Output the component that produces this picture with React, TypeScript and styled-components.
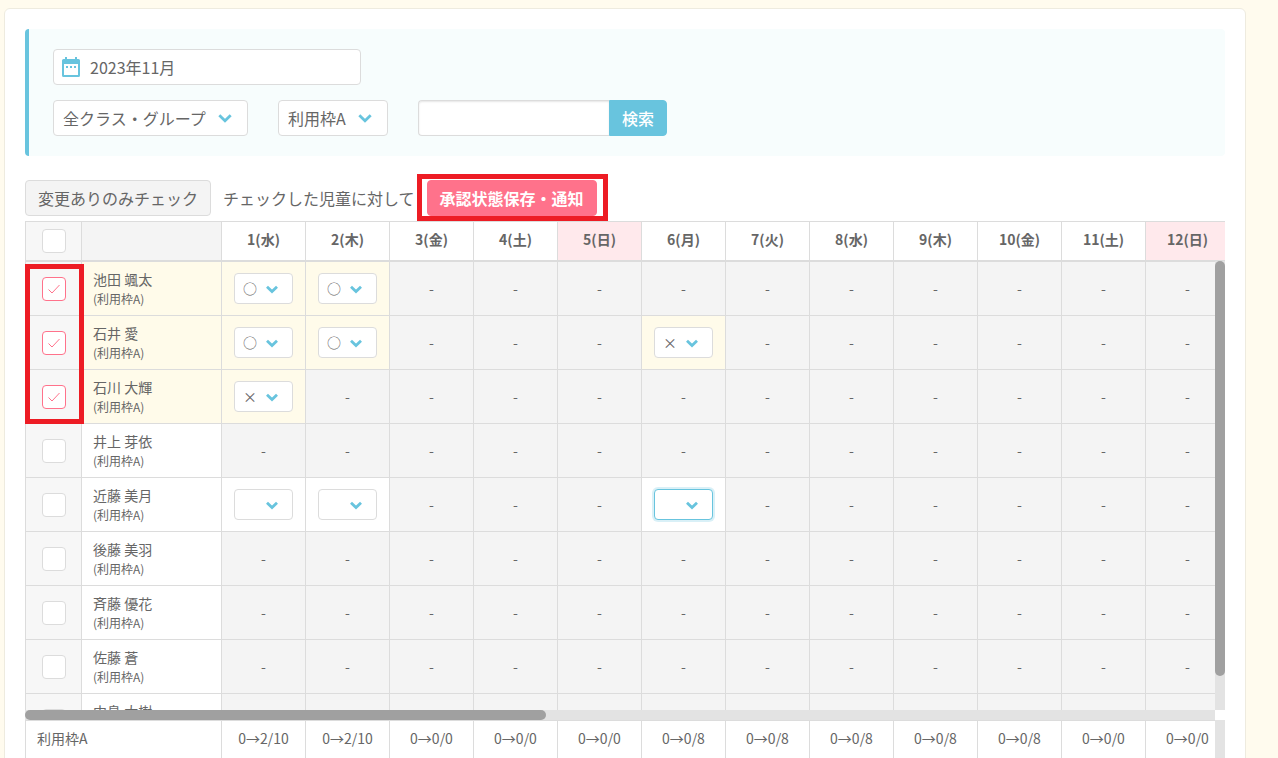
import React from "react";
import styled, { createGlobalStyle, css } from "styled-components";

const color = {
  page: "#fffbee",
  text: "#666666",
  line: "#dcdcdc",
  accent: "#68c4de",
  pink: "#ff728b",
  mute: "#f4f4f4",
  changed: "#fffbea",
  holiday: "#ffe9ec",
  mark: "#ed1c24",
};

const GlobalStyle = createGlobalStyle`
  *, *::before, *::after { box-sizing: border-box; }
  html, body, #root { height: 100%; }
  body {
    margin: 0;
    background: ${color.page};
    color: ${color.text};
    font-family: "Noto Sans CJK JP", sans-serif;
    font-size: 16px;
    line-height: 24px;
  }
  button, input, select { font: inherit; color: inherit; margin: 0; }
`;

const Page = styled.div`
  height: 100%;
  overflow: hidden;
  padding: 8px 32px 0 4px;
`;

const Card = styled.main`
  padding: 20px;
  background: #fff;
  border: 1px solid #eeebdf;
  border-radius: 6px;
`;

const FilterPanel = styled.form`
  display: flex;
  flex-direction: column;
  gap: 15px;
  padding: 20px 24px;
  background: #f7fdfd;
  border-left: 4px solid ${color.accent};
  border-radius: 4px;
`;

const FilterRow = styled.div`
  display: flex;
  gap: 30px;
`;

const field = css`
  height: 36px;
  background: #fff;
  border: 1px solid ${color.line};
  border-radius: 4px;
`;

const DateField = styled.label`
  ${field}
  display: flex;
  align-items: center;
  gap: 9px;
  width: 308px;
  padding: 0 7px;
`;

const DateInput = styled.input`
  flex: 1;
  min-width: 0;
  padding: 0;
  border: 0;
  outline: 0;
  background: none;
`;

const SearchGroup = styled.div`
  display: flex;
`;

const SearchInput = styled.input`
  ${field}
  width: 191px;
  padding: 0 10px;
  border-right: 0;
  border-radius: 4px 0 0 4px;
  box-shadow: inset 0 1px 2px rgba(0, 0, 0, 0.1);
`;

const Button = styled.button<{ $tone: "accent" | "pink" | "plain" }>`
  height: 36px;
  padding: 0 12px;
  border: 1px solid;
  border-radius: 4px;
  white-space: nowrap;
  ${({ $tone }) =>
    $tone === "plain"
      ? css`
          background: ${color.mute};
          border-color: ${color.line};
        `
      : css`
          background: ${color[$tone]};
          border-color: ${color[$tone]};
          color: #fff;
          font-weight: ${$tone === "pink" ? 700 : 500};
        `}
`;

const SearchButton = styled(Button)`
  border-radius: 0 4px 4px 0;
`;

const SelectBox = styled.span<{ $small?: boolean; $width: number }>`
  position: relative;
  display: inline-flex;
  vertical-align: top;
  width: ${({ $width }) => $width}px;
  svg {
    position: absolute;
    top: 50%;
    right: ${({ $small }) => ($small ? 14 : 16)}px;
    transform: translateY(-50%);
    pointer-events: none;
  }
`;

const SelectControl = styled.select<{ $small?: boolean; $focused?: boolean }>`
  ${field}
  appearance: none;
  width: 100%;
  padding: 0 9px;
  outline: 0;
  ${({ $small }) =>
    $small &&
    css`
      height: 31px;
      padding: 0 8px 2px;
      font-size: 14px;
      line-height: 20px;
    `}
  ${({ $focused }) =>
    $focused &&
    css`
      border-color: ${color.accent};
      box-shadow: 0 0 0 2px rgba(104, 196, 222, 0.25);
    `}
`;

const Toolbar = styled.div`
  display: flex;
  align-items: center;
  gap: 12px;
  margin: 24px 0 5px;
`;

const Marked = styled.span`
  position: relative;
  display: flex;
  &::after {
    content: "";
    position: absolute;
    inset: -6px -11px -5px -10px;
    border: 5px solid ${color.mark};
    pointer-events: none;
  }
`;

const CheckMarked = styled.div`
  position: absolute;
  z-index: 1;
  top: 3px;
  left: 0;
  width: 59px;
  height: 160px;
  border: 5px solid ${color.mark};
  pointer-events: none;
`;

const Sheet = styled.section`
  display: grid;
  grid-template-columns: minmax(0, 1fr) 10px;
`;

const HeadPane = styled.div`
  grid-column: 1 / -1;
  overflow: hidden;
`;

const BodyPane = styled.div`
  position: relative;
  max-height: 449px;
  overflow: hidden;
`;

const FootPane = styled.div`
  overflow: hidden;
`;

const Track = styled.div<{ $vertical?: boolean }>`
  background: #e3e3e3;
  ${({ $vertical }) => !$vertical && "height: 10px;"}
`;

const Thumb = styled.div`
  background: #a0a0a0;
  border-radius: 5px;
`;

const Corner = styled.div`
  background: #fff;
`;

const Table = styled.table`
  width: max-content;
  border-collapse: separate;
  border-spacing: 0;
  font-size: 14px;
  line-height: 20px;
`;

type Tone = "plain" | "mute" | "changed" | "holiday";
const toneColor: Record<Tone, string> = {
  plain: "#fff",
  mute: color.mute,
  changed: color.changed,
  holiday: color.holiday,
};

const cell = css<{ $tone?: Tone }>`
  width: 84px;
  min-width: 84px;
  padding: 0;
  text-align: center;
  vertical-align: middle;
  background: ${({ $tone = "plain" }) => toneColor[$tone]};
  border: 0 solid ${color.line};
  border-width: 1px 0 0 1px;
`;

const HeadCell = styled.th<{ $tone?: Tone }>`
  ${cell}
  height: 40px;
  padding-bottom: 4px;
  border-bottom-width: 1px;
  font-weight: 700;
`;

const DayCell = styled.td<{ $tone?: Tone }>`
  ${cell}
  height: 54px;
`;

const EmptyDayCell = styled(DayCell)`
  padding-bottom: 2px;
`;

const checkWidth = css`
  width: 56px;
  min-width: 56px;
  padding: 0;
  background: #f7f7f7;
`;

const HeadCheckCell = styled(HeadCell)`
  ${checkWidth}
`;

const CheckCell = styled(DayCell)`
  ${checkWidth}
`;

const HeadNameCell = styled(HeadCell)`
  width: 140px;
`;

const NameCell = styled.th<{ $tone?: Tone }>`
  ${cell}
  width: 140px;
  padding: 0 11px;
  text-align: left;
  font-weight: 400;
`;

const FootCell = styled.td`
  ${cell}
  height: 38px;
  padding-bottom: 4px;
`;

const FootNameCell = styled.th`
  ${cell}
  width: 196px;
  padding: 0 11px 4px;
  text-align: left;
  font-weight: 400;
`;

const Group = styled.small`
  display: block;
  font-size: 12px;
`;

const Tick = styled.label`
  display: inline-grid;
  vertical-align: top;
  width: 24px;
  height: 24px;
  > * {
    grid-area: 1 / 1;
    place-self: center;
  }
  svg {
    pointer-events: none;
  }
`;

const TickInput = styled.input`
  appearance: none;
  width: 24px;
  height: 24px;
  background: #fff;
  border: 1px solid ${color.line};
  border-radius: 4px;
  & + svg {
    visibility: hidden;
  }
  &:checked {
    border-color: ${color.pink};
  }
  &:checked + svg {
    visibility: visible;
  }
`;

function Chevron({ small }: { small?: boolean }) {
  return small ? (
    <svg width="13" height="12" viewBox="0 0 13 12" fill="none" stroke={color.accent} strokeWidth="2.800" aria-hidden>
      <path d="M1 3.700l5 4.800 5-4.800" />
    </svg>
  ) : (
    <svg width="14" height="14" viewBox="0 0 14 14" fill="none" stroke={color.accent} strokeWidth="2.800" aria-hidden>
      <path d="M1.300 4.300l5.700 5.400 5.700-5.400" />
    </svg>
  );
}

function CalendarIcon() {
  return (
    <svg width="20" height="20" viewBox="0 0 20 20" fill={color.accent} aria-hidden>
      <path
        fillRule="evenodd"
        d="M4 0h2v2h8V0h2v2h1.500a1.500 1.500 0 0 1 1.500 1.500v15a1.500 1.500 0 0 1-1.500 1.500h-15A1.500 1.500 0 0 1 1 18.500v-15A1.500 1.500 0 0 1 2.500 2H4zM3 7v11h14V7z"
      />
      <path d="M5 9h2v2H5zM9 9h2v2H9zM13 9h2v2h-2z" />
    </svg>
  );
}

function Checkbox({ label, checked }: { label: string; checked?: boolean }) {
  return (
    <Tick>
      <TickInput type="checkbox" aria-label={label} defaultChecked={checked} />
      <svg width="12" height="12" viewBox="0 0 12 12" fill="none" stroke={color.pink} aria-hidden>
        <path d="M.5 6.500l3.500 3.500L11.500 2" />
      </svg>
    </Tick>
  );
}

interface SelectProps {
  label: string;
  options: string[];
  value: string;
  width: number;
  small?: boolean;
  focused?: boolean;
}

function Select({ label, options, value, width, small, focused }: SelectProps) {
  return (
    <SelectBox $width={width} $small={small}>
      <SelectControl aria-label={label} defaultValue={value} $small={small} $focused={focused}>
        {options.map((option) => (
          <option key={option} value={option}>
            {option}
          </option>
        ))}
      </SelectControl>
      <Chevron small={small} />
    </SelectBox>
  );
}

const weekdays = ["水", "木", "金", "土", "日", "月", "火"];
const days = Array.from({ length: 12 }, (_, i) => ({
  date: i + 1,
  weekday: weekdays[i % 7],
}));

const group = "利用枠A";

interface Child {
  name: string;
  changed?: boolean;
  focusedDay?: number;
  requests?: Record<number, string>;
}

const children: Child[] = [
  { name: "池田 颯太", changed: true, requests: { 1: "○", 2: "○" } },
  { name: "石井 愛", changed: true, requests: { 1: "○", 2: "○", 6: "×" } },
  { name: "石川 大輝", changed: true, requests: { 1: "×" } },
  { name: "井上 芽依" },
  { name: "近藤 美月", requests: { 1: "", 2: "", 6: "" }, focusedDay: 6 },
  { name: "後藤 美羽" },
  { name: "斉藤 優花" },
  { name: "佐藤 蒼" },
  { name: "中島 大樹" },
];

const totals = [
  "0→2/10", "0→2/10", "0→0/0", "0→0/0", "0→0/0", "0→0/8",
  "0→0/8", "0→0/8", "0→0/8", "0→0/8", "0→0/0", "0→0/0",
];

function ChildRow({ child }: { child: Child }) {
  return (
    <tr>
      <CheckCell>
        <Checkbox label={child.name} checked={child.changed} />
      </CheckCell>
      <NameCell scope="row" $tone={child.changed ? "changed" : "plain"}>
        {child.name}
        <Group>({group})</Group>
      </NameCell>
      {days.map(({ date }) => {
        const request = child.requests?.[date];
        if (request === undefined) {
          return (
            <EmptyDayCell key={date} $tone="mute">
              -
            </EmptyDayCell>
          );
        }
        return (
          <DayCell key={date} $tone={request ? "changed" : "plain"}>
            <Select
              small
              width={59}
              label={`${child.name} ${date}`}
              options={["", "○", "×"]}
              value={request}
              focused={child.focusedDay === date}
            />
          </DayCell>
        );
      })}
    </tr>
  );
}

export default function App() {
  return (
    <Page>
      <GlobalStyle />
      <Card>
        <FilterPanel onSubmit={(event) => event.preventDefault()}>
          <DateField>
            <CalendarIcon />
            <DateInput type="text" aria-label="年月" defaultValue="2023年11月" />
          </DateField>
          <FilterRow>
            <Select label="クラス" width={195} value="全クラス・グループ" options={["全クラス・グループ"]} />
            <Select label="利用枠" width={110} value={group} options={[group]} />
            <SearchGroup>
              <SearchInput type="text" aria-label="検索" />
              <SearchButton type="submit" $tone="accent">
                検索
              </SearchButton>
            </SearchGroup>
          </FilterRow>
        </FilterPanel>

        <Toolbar>
          <Button type="button" $tone="plain">
            変更ありのみチェック
          </Button>
          <span>チェックした児童に対して</span>
          <Marked>
            <Button type="button" $tone="pink">
              承認状態保存・通知
            </Button>
          </Marked>
        </Toolbar>

        <Sheet>
          <HeadPane>
            <Table>
              <thead>
                <tr>
                  <HeadCheckCell>
                    <Checkbox label="すべて" />
                  </HeadCheckCell>
                  <HeadNameCell $tone="mute" />
                  {days.map(({ date, weekday }) => (
                    <HeadCell key={date} scope="col" $tone={weekday === "日" ? "holiday" : "plain"}>
                      {date}({weekday})
                    </HeadCell>
                  ))}
                </tr>
              </thead>
            </Table>
          </HeadPane>

          <BodyPane>
            <CheckMarked />
            <Table>
              <tbody>
                {children.map((child) => (
                  <ChildRow key={child.name} child={child} />
                ))}
              </tbody>
            </Table>
          </BodyPane>
          <Track $vertical>
            <Thumb style={{ height: `${(449 / 486) * 100}%` }} />
          </Track>

          <Track>
            <Thumb style={{ height: "100%", width: `${(1190 / 2716) * 100}%` }} />
          </Track>
          <Corner />

          <FootPane>
            <Table>
              <tbody>
                <tr>
                  <FootNameCell scope="row">{group}</FootNameCell>
                  {totals.map((total, i) => (
                    <FootCell key={i}>{total}</FootCell>
                  ))}
                </tr>
              </tbody>
            </Table>
          </FootPane>
          <Track $vertical />
        </Sheet>
      </Card>
    </Page>
  );
}
